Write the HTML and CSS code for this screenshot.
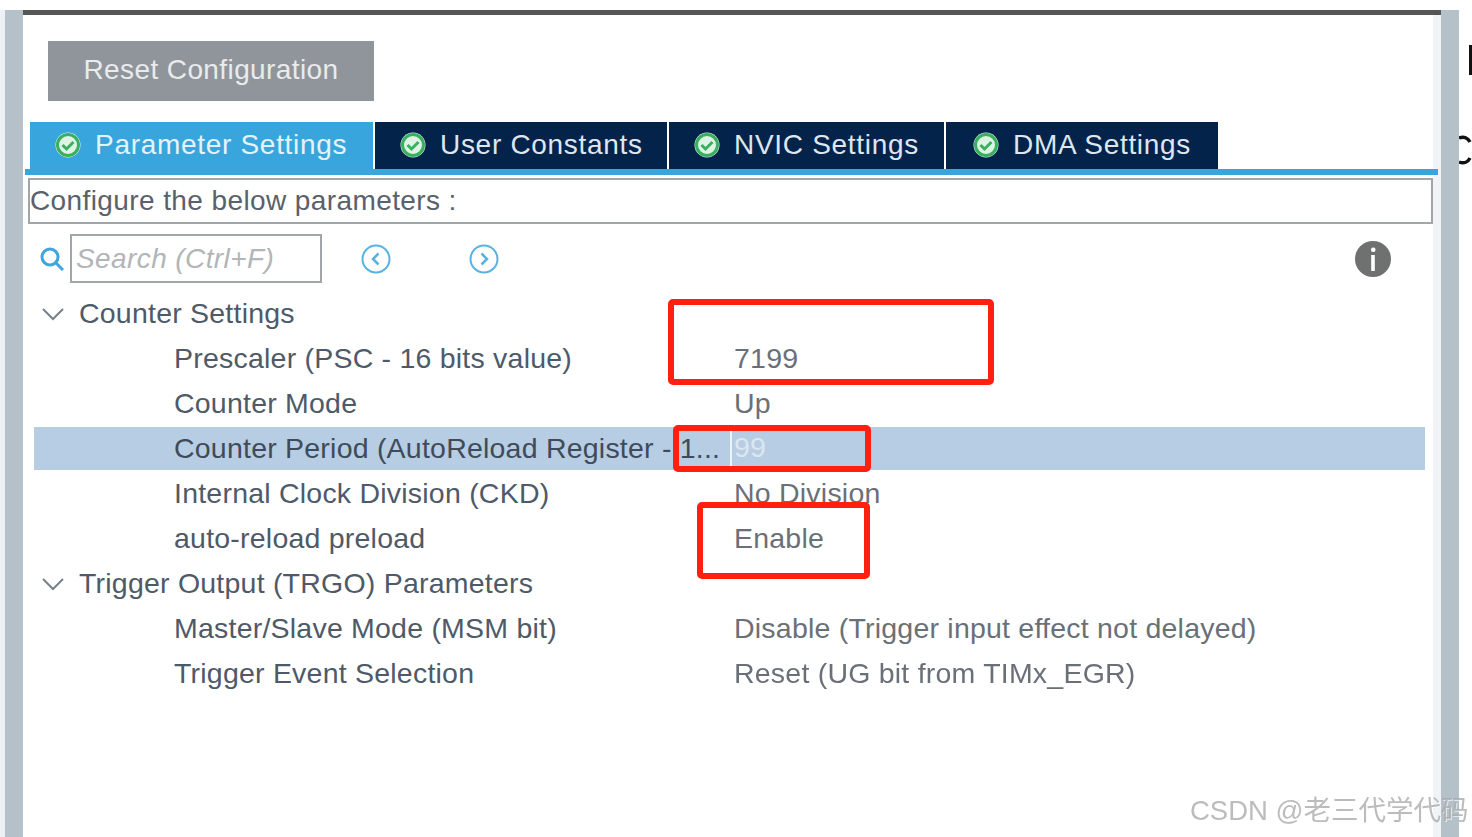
FILE: index.html
```html
<!DOCTYPE html>
<html lang="en">
<head>
<meta charset="utf-8">
<title>Parameter Settings</title>
<link rel="stylesheet" href="styles.css">
</head>
<body>
<div class="app">
  <div class="edge"></div>
  <div class="gutter"></div>
  <main class="panel">
    <div class="strip"></div>
    <button class="reset">Reset Configuration</button>
    <nav class="tabs">
      <div class="tab tab-active"><svg class="check" viewBox="0 0 26 26"><circle cx="13" cy="13" r="12.500" fill="#dff3e4"/><circle cx="13" cy="13" r="10.500" fill="none" stroke="#38b060" stroke-width="3"/><path d="M7.500 13l4 4 7-7" fill="none" stroke="#38b060" stroke-width="3"/></svg><span>Parameter Settings</span></div>
      <div class="tab tab-user"><svg class="check" viewBox="0 0 26 26"><circle cx="13" cy="13" r="12.500" fill="#dff3e4"/><circle cx="13" cy="13" r="10.500" fill="none" stroke="#38b060" stroke-width="3"/><path d="M7.500 13l4 4 7-7" fill="none" stroke="#38b060" stroke-width="3"/></svg><span>User Constants</span></div>
      <div class="tab tab-nvic"><svg class="check" viewBox="0 0 26 26"><circle cx="13" cy="13" r="12.500" fill="#dff3e4"/><circle cx="13" cy="13" r="10.500" fill="none" stroke="#38b060" stroke-width="3"/><path d="M7.500 13l4 4 7-7" fill="none" stroke="#38b060" stroke-width="3"/></svg><span>NVIC Settings</span></div>
      <div class="tab tab-dma"><svg class="check" viewBox="0 0 26 26"><circle cx="13" cy="13" r="12.500" fill="#dff3e4"/><circle cx="13" cy="13" r="10.500" fill="none" stroke="#38b060" stroke-width="3"/><path d="M7.500 13l4 4 7-7" fill="none" stroke="#38b060" stroke-width="3"/></svg><span>DMA Settings</span></div>
    </nav>
    <div class="tabline"></div>
    <div class="configure">Configure the below parameters :</div>
    <div class="toolbar">
      <svg class="search-icon" viewBox="0 0 24 24"><circle cx="10" cy="10" r="8" fill="none" stroke="#3fa5dc" stroke-width="3"/><path d="M16 16l7 7" stroke="#3fa5dc" stroke-width="3"/></svg>
      <div class="search">Search (Ctrl+F)</div>
      <svg class="nav-icon nav-prev" viewBox="0 0 30 30"><circle cx="15" cy="15" r="13.500" fill="none" stroke="#58b2e2" stroke-width="2"/><path d="M17.500 9.500l-5.500 5.500 5.500 5.500" fill="none" stroke="#58b2e2" stroke-width="2.500"/></svg>
      <svg class="nav-icon nav-next" viewBox="0 0 30 30"><circle cx="15" cy="15" r="13.500" fill="none" stroke="#58b2e2" stroke-width="2"/><path d="M12.500 9.500l5.500 5.500-5.500 5.500" fill="none" stroke="#58b2e2" stroke-width="2.500"/></svg>
      <svg class="info-icon" viewBox="0 0 36 36"><circle cx="18" cy="18" r="18" fill="#6f7070"/><rect x="16" y="6.500" width="4.500" height="4.500" rx="2" fill="#fff"/><rect x="16.200" y="14" width="3.600" height="16" fill="#fff"/></svg>
    </div>
    <section class="tree">
      <div class="row group"><svg class="chev" viewBox="0 0 24 14"><path d="M2 2l10 10L22 2" fill="none" stroke="#77808a" stroke-width="2"/></svg><span class="group-label">Counter Settings</span></div>
      <div class="row"><span class="label">Prescaler (PSC - 16 bits value)</span><span class="value">7199</span></div>
      <div class="row"><span class="label">Counter Mode</span><span class="value">Up</span></div>
      <div class="row row-selected"><span class="label">Counter Period (AutoReload Register - 1...</span><span class="value value-edit">99</span></div>
      <div class="row"><span class="label">Internal Clock Division (CKD)</span><span class="value">No Division</span></div>
      <div class="row"><span class="label">auto-reload preload</span><span class="value">Enable</span></div>
      <div class="row group"><svg class="chev" viewBox="0 0 24 14"><path d="M2 2l10 10L22 2" fill="none" stroke="#77808a" stroke-width="2"/></svg><span class="group-label">Trigger Output (TRGO) Parameters</span></div>
      <div class="row"><span class="label">Master/Slave Mode (MSM bit)</span><span class="value">Disable (Trigger input effect not delayed)</span></div>
      <div class="row"><span class="label">Trigger Event Selection</span><span class="value">Reset (UG bit from TIMx_EGR)</span></div>
    </section>
  </main>
  <div class="gutter"></div>
  <div class="outside">
    <span class="outside-bar"></span>
    <svg class="outside-c" viewBox="0 0 14 30"><path d="M0 3c5-2 9 0 11 4M0 27c5 2 9 0 11-4" fill="none" stroke="#111" stroke-width="3.500"/></svg>
  </div>
</div>
<div class="mark mark-prescaler"></div>
<div class="mark mark-period"></div>
<div class="mark mark-enable"></div>
<div class="watermark">CSDN @老三代学代码</div>
</body>
</html>
```
FILE: styles.css
```css
* { box-sizing: border-box; }
html, body { margin: 0; height: 837px; overflow: hidden; background: #fff; }
body { position: relative; font-family: "Liberation Sans", Arial, sans-serif; color: #59616a; }

.app { display: flex; height: 837px; padding-top: 10px; filter: blur(0.6px); }
.edge { width: 5px; background: #eef1f3; flex: none; }
.gutter { width: 18px; background: #b5c1c9; flex: none; }
.panel { width: 1418px; flex: none; display: flex; flex-direction: column; background: linear-gradient(to right, #fff 1410px, #f1f3f6 1410px); }

.strip { height: 5px; background: #555; flex: none; }
.reset { width: 326px; height: 60px; margin: 26px 0 0 25px; padding: 0 0 2px; flex: none; border: 0; background: #90959b; color: #e9ebec; font: 28px "Liberation Sans", Arial, sans-serif; letter-spacing: 0.4px; }

.tabs { display: flex; height: 47px; margin: 21px 0 0 7px; gap: 2px; flex: none; }
.tab { display: flex; align-items: center; padding-left: 25px; background: #03234b; color: #dfe6ee; font-size: 28px; letter-spacing: 0.7px; white-space: nowrap; }
.tab span { margin-left: 14px; margin-top: -2px; }
.tab-active { width: 343px; background: #38a6dc; color: #e4f3fb; }
.tab-user { width: 292px; }
.tab-nvic { width: 275px; }
.tab-dma { width: 272px; padding-left: 27px; }
.check { width: 26px; height: 26px; flex: none; margin-top: -2px; }
.tabline { height: 6px; margin: 0 3px 0 2px; background: #38a6dc; flex: none; }

.configure { height: 46px; margin: 3px 8px 0 5px; flex: none; border: 2px solid #a2a6ab; background: #fff; line-height: 42px; font-size: 28px; letter-spacing: 0.4px; white-space: nowrap; }

.toolbar { display: flex; align-items: center; height: 59px; margin-top: 5px; flex: none; }
.search-icon { width: 24px; height: 24px; margin-left: 17px; flex: none; }
.search { width: 252px; height: 49px; margin-left: 6px; border: 2px solid #a2a6ab; color: #b2b5b9; font-style: italic; font-size: 28px; letter-spacing: 0.4px; line-height: 46px; padding-left: 4px; white-space: nowrap; flex: none; }
.nav-icon { width: 30px; height: 30px; flex: none; }
.nav-prev { margin-left: 39px; }
.nav-next { margin-left: 78px; }
.info-icon { width: 36px; height: 36px; margin-left: 856px; flex: none; }

.tree { display: flex; flex-direction: column; margin: 3px 16px 0 11px; }
.row { display: flex; align-items: center; height: 45px; padding-left: 140px; font-size: 28.5px; white-space: nowrap; letter-spacing: 0.22px; }
.group { padding-left: 7px; }
.chev { width: 24px; height: 14px; flex: none; }
.group-label { margin-left: 14px; color: #4e5a68; }
.label { width: 560px; flex: none; color: #4e5a68; overflow: hidden; }
.value { color: #6a7078; }
.row-selected { background: #b6cde4; height: 43px; margin: 1px 0; }
.row-selected .label { width: 556px; color: #3f4b5a; }
.value-edit { color: #dbe6f1; border-left: 2px solid #eef3f9; padding-left: 2px; height: 100%; line-height: 41px; }

.outside { width: 13px; flex: none; overflow: hidden; }
.outside-bar { display: block; width: 3px; height: 30px; margin: 35px 0 0 10px; background: #111; }
.outside-c { display: block; width: 14px; height: 30px; margin-top: 60px; }

.mark { position: absolute; border: 6px solid #ff2010; border-radius: 5px; }
.mark-prescaler { left: 668px; top: 299px; width: 326px; height: 86px; }
.mark-period { left: 673px; top: 425px; width: 198px; height: 47px; }
.mark-enable { left: 697px; top: 502px; width: 173px; height: 77px; }

.watermark { position: absolute; left: 1190px; top: 794px; font-family: "Liberation Sans", "Noto Sans CJK SC", sans-serif; font-size: 27.500px; line-height: 34px; color: rgba(165,165,165,0.75); white-space: nowrap; text-shadow: 1px 1px 0 rgba(255,255,255,0.6); }
```
